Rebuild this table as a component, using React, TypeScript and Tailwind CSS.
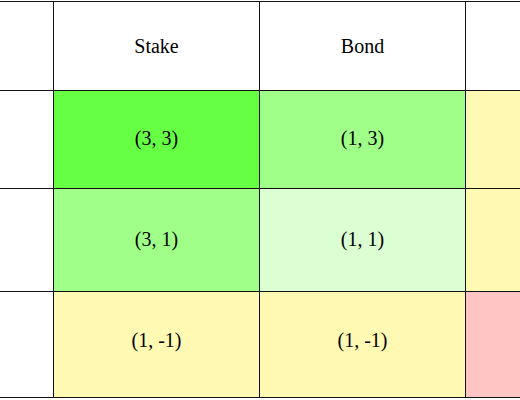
import React from "react";

const rows: { h: string; pb: string; cells: { t: string; bg: string }[] }[] = [
  {
    h: "h-[89px]",
    pb: "pb-0",
    cells: [
      { t: "", bg: "bg-white" },
      { t: "Stake", bg: "bg-white" },
      { t: "Bond", bg: "bg-white" },
      { t: "", bg: "bg-white" },
    ],
  },
  {
    h: "h-[98px]",
    pb: "pb-[4px]",
    cells: [
      { t: "", bg: "bg-white" },
      { t: "(3, 3)", bg: "bg-[#66ff44]" },
      { t: "(1, 3)", bg: "bg-[#9fff88]" },
      { t: "", bg: "bg-[#fff9b3]" },
    ],
  },
  {
    h: "h-[103px]",
    pb: "pb-[2px]",
    cells: [
      { t: "", bg: "bg-white" },
      { t: "(3, 1)", bg: "bg-[#9fff88]" },
      { t: "(1, 1)", bg: "bg-[#dbffd2]" },
      { t: "", bg: "bg-[#fff9b3]" },
    ],
  },
  {
    h: "h-[106px]",
    pb: "pb-[9px]",
    cells: [
      { t: "", bg: "bg-white" },
      { t: "(1, -1)", bg: "bg-[#fff9b3]" },
      { t: "(1, -1)", bg: "bg-[#fff9b3]" },
      { t: "", bg: "bg-[#ffc4c4]" },
    ],
  },
];

export default function App() {
  return (
    <div className="w-[520px] h-[400px] overflow-hidden bg-white pt-px">
      <div
        className="w-[672px] border-t border-[#111]"
        style={{ fontFamily: '"Liberation Serif", "Times New Roman", serif' }}
      >
        {rows.map((r, i) => (
          <div key={i} className={`grid grid-cols-[54px_206px_206px_206px] ${r.h}`}>
            {r.cells.map((c, j) => (
              <div
                key={j}
                className={`${c.bg} ${r.pb} border-r border-b border-[#111] flex items-center justify-center text-[20px] text-black`}
              >
                {c.t}
              </div>
            ))}
          </div>
        ))}
      </div>
    </div>
  );
}
